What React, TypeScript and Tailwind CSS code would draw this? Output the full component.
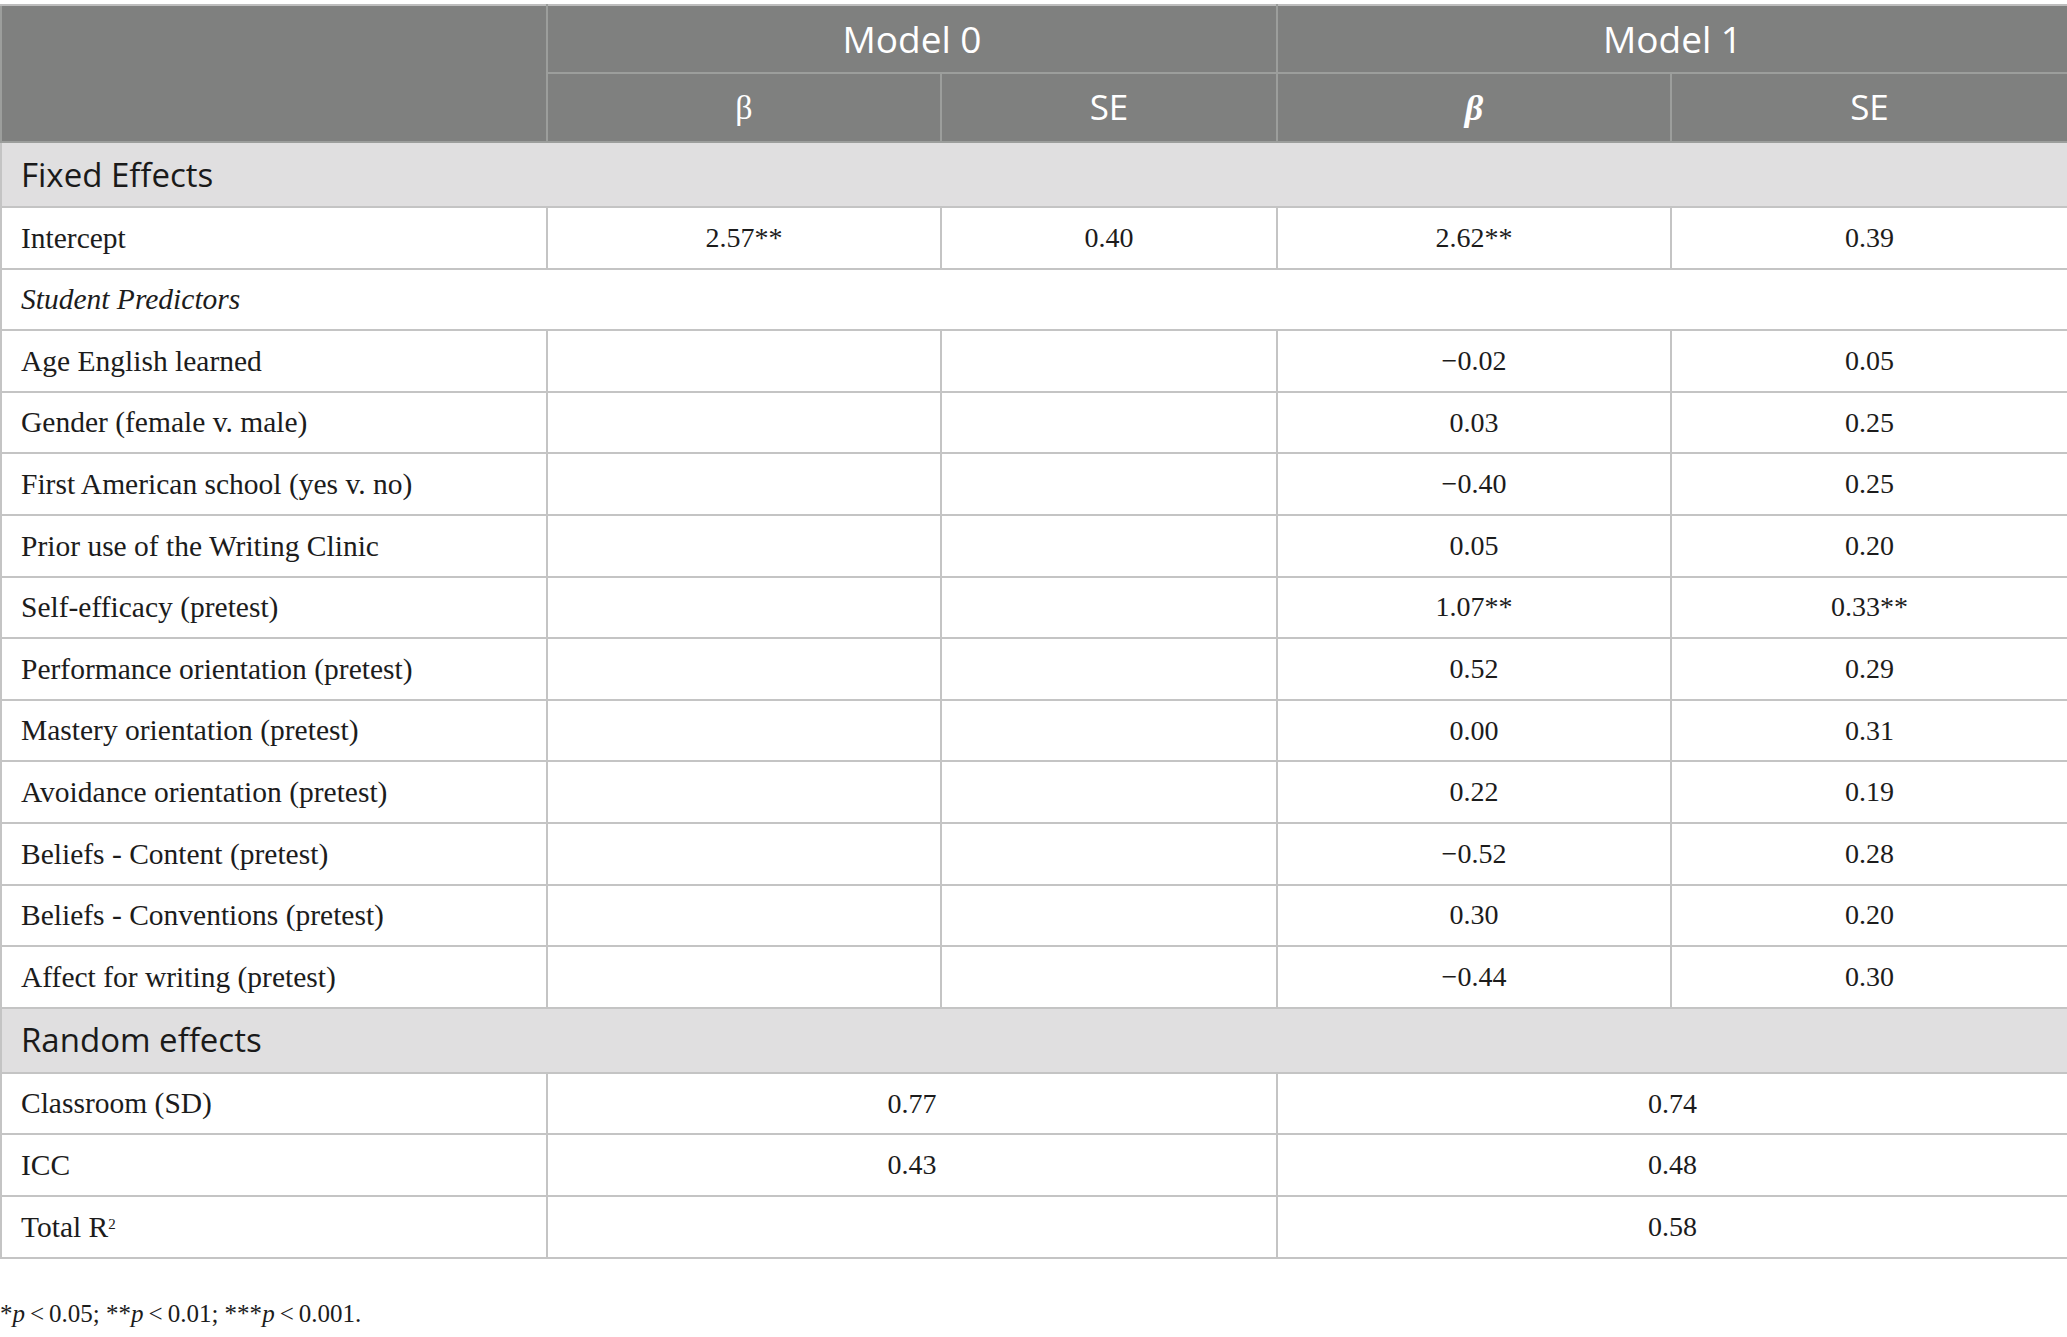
type Row = {
  label: string;
  italic?: boolean;
  b0?: string;
  se0?: string;
  b1?: string;
  se1?: string;
};

const fixedRows: Row[] = [
  { label: "Intercept", b0: "2.57**", se0: "0.40", b1: "2.62**", se1: "0.39" },
  { label: "Student Predictors", italic: true },
  { label: "Age English learned", b1: "\u22120.02", se1: "0.05" },
  { label: "Gender (female v. male)", b1: "0.03", se1: "0.25" },
  { label: "First American school (yes v. no)", b1: "\u22120.40", se1: "0.25" },
  { label: "Prior use of the Writing Clinic", b1: "0.05", se1: "0.20" },
  { label: "Self-efficacy (pretest)", b1: "1.07**", se1: "0.33**" },
  { label: "Performance orientation (pretest)", b1: "0.52", se1: "0.29" },
  { label: "Mastery orientation (pretest)", b1: "0.00", se1: "0.31" },
  { label: "Avoidance orientation (pretest)", b1: "0.22", se1: "0.19" },
  { label: "Beliefs - Content (pretest)", b1: "\u22120.52", se1: "0.28" },
  { label: "Beliefs - Conventions (pretest)", b1: "0.30", se1: "0.20" },
  { label: "Affect for writing (pretest)", b1: "\u22120.44", se1: "0.30" },
];

// numbers sit a touch smaller than the row labels
const td = "border-2 border-[#c4c4c4] text-center align-middle text-[28px]";
const labelTd = "border-2 border-[#c4c4c4] pl-[19px] text-left align-middle text-[29.5px]";
const serif = "font-['Liberation_Serif',serif] text-[#1c1c1c]";
const sans = "font-['Open_Sans',sans-serif]";

export default function App() {
  return (
    <div className="min-h-screen w-[2067px] bg-white pt-[4px]">
      <table className="w-[2067px] table-fixed border-collapse">
        <colgroup>
          <col className="w-[546px]" />
          <col className="w-[394px]" />
          <col className="w-[336px]" />
          <col className="w-[394px]" />
          <col className="w-[397px]" />
        </colgroup>
        <thead className="bg-[#7f807f] text-white">
          <tr className="h-[68px]">
            <th rowSpan={2} className="border-2 border-[#9c9e9c] border-t-[#bdbdbd]" />
            <th colSpan={2} className={`border-2 border-[#9c9e9c] border-t-[#bdbdbd] ${sans} text-[37px] font-normal`}>
              Model 0
            </th>
            <th colSpan={2} className={`border-2 border-[#9c9e9c] border-t-[#bdbdbd] ${sans} text-[37px] font-normal`}>
              Model 1
            </th>
          </tr>
          <tr className="h-[69px]">
            <th className="border-2 border-[#9c9e9c] font-['Liberation_Serif',serif] text-[34px] font-normal">β</th>
            <th className={`border-2 border-[#9c9e9c] ${sans} text-[35px] font-normal`}>SE</th>
            <th className="border-2 border-[#9c9e9c] font-['Liberation_Serif',serif] text-[36px] font-bold italic">β</th>
            <th className={`border-2 border-[#9c9e9c] ${sans} text-[35px] font-normal`}>SE</th>
          </tr>
        </thead>
        <tbody>
          <tr className="h-[65px] bg-[#e0dfe0]">
            <td colSpan={5} className={`border-2 border-[#c4c4c4] pl-[19px] ${sans} text-[33px] text-[#1a1a1a]`}>
              Fixed Effects
            </td>
          </tr>
          {fixedRows.map((r) =>
            r.italic ? (
              <tr key={r.label} className={`h-[61.6px] ${serif}`}>
                <td colSpan={5} className={`${labelTd} italic`}>
                  {r.label}
                </td>
              </tr>
            ) : (
              <tr key={r.label} className={`h-[61.6px] ${serif}`}>
                <td className={labelTd}>{r.label}</td>
                <td className={td}>{r.b0}</td>
                <td className={td}>{r.se0}</td>
                <td className={td}>{r.b1}</td>
                <td className={td}>{r.se1}</td>
              </tr>
            )
          )}
          <tr className="h-[65px] bg-[#e0dfe0]">
            <td colSpan={5} className={`border-2 border-[#c4c4c4] pl-[19px] ${sans} text-[33px] text-[#1a1a1a]`}>
              Random effects
            </td>
          </tr>
          <tr className={`h-[61.6px] ${serif}`}>
            <td className={labelTd}>Classroom (SD)</td>
            <td colSpan={2} className={td}>0.77</td>
            <td colSpan={2} className={td}>0.74</td>
          </tr>
          <tr className={`h-[61.6px] ${serif}`}>
            <td className={labelTd}>ICC</td>
            <td colSpan={2} className={td}>0.43</td>
            <td colSpan={2} className={td}>0.48</td>
          </tr>
          <tr className={`h-[61.6px] ${serif}`}>
            <td className={labelTd}>
              Total R<sup className="text-[15px]">2</sup>
            </td>
            <td colSpan={2} className={td}></td>
            <td colSpan={2} className={td}>0.58</td>
          </tr>
        </tbody>
      </table>
      <p className="mt-[36px] font-['Liberation_Serif',serif] text-[25px] text-[#1c1c1c]">
        *<i>p</i>{"\u2009<\u2009"}0.05; **<i>p</i>{"\u2009<\u2009"}0.01; ***<i>p</i>{"\u2009<\u2009"}0.001.
      </p>
    </div>
  );
}
